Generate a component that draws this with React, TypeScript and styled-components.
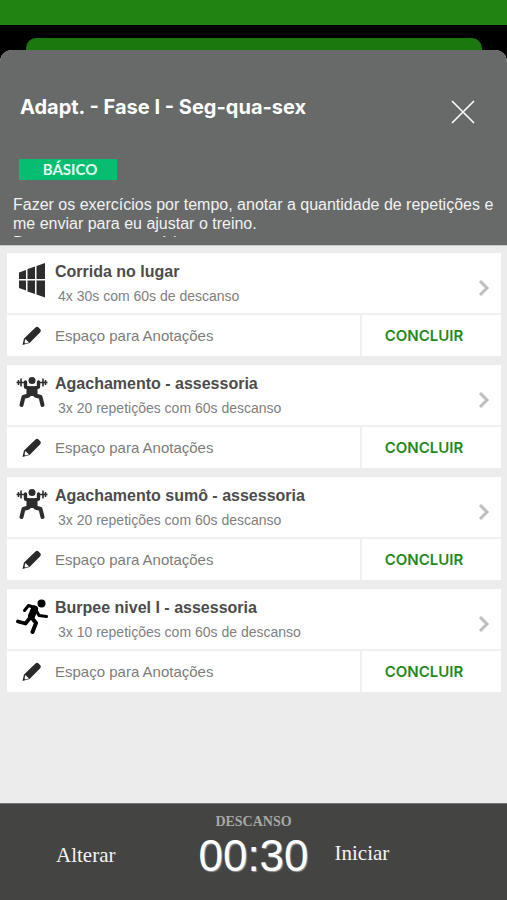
import React from "react";
import styled, { createGlobalStyle } from "styled-components";

const Global = createGlobalStyle`
  * { box-sizing: border-box; }
  body { margin: 0; background: #000; font-family: "Liberation Sans", Arial, sans-serif; }
  button, input { font: inherit; border: 0; padding: 0; margin: 0; background: none; border-radius: 0; }
  button { cursor: pointer; }
  h1, h2, p { margin: 0; }
`;

const Page = styled.div`
  min-height: 100vh;
  display: flex;
  flex-direction: column;
  background: #000;
`;
const StatusBar = styled.div`
  height: 25px;
  background: #1f8412;
`;
const BackSheet = styled.div`
  height: 12px;
  margin: 13px 25px 0 26px;
  border-radius: 10px 10px 0 0;
  background: #1a780f;
`;
const Sheet = styled.main`
  flex: 1;
  display: flex;
  flex-direction: column;
  background: #ebebeb;
  border-radius: 12px 12px 0 0;
  overflow: hidden;
`;
const Header = styled.header`
  height: 195px;
  padding: 44px 13px 0;
  background: #686a69;
  color: #fff;
`;
const TitleRow = styled.div`
  display: flex;
  justify-content: space-between;
  align-items: flex-start;
  height: 65px;
  padding: 0 19px 0 7px;
`;
const Title = styled.h1`
  font: 700 20px/26px Inter, sans-serif;
`;
const Close = styled.button`
  display: flex;
  margin-top: 6px;
  color: #fff;
`;
const Tag = styled.span`
  display: block;
  width: 98px;
  margin-left: 6px;
  padding-left: 4px;
  background: #06bd72;
  color: #e6fff3;
  font: 700 15px/21px Lato, sans-serif;
  text-align: center;
`;
const Description = styled.p`
  height: 42px;
  margin-top: 15px;
  overflow: hidden;
  color: #f2f2f2;
  font-size: 16px;
  line-height: 19px;
`;
const List = styled.ul`
  flex: 1;
  display: flex;
  flex-direction: column;
  gap: 9px;
  margin: 0;
  padding: 7px 6px 8px 7px;
  border-top: 1px solid #c8c8c8;
  list-style: none;
  background: #ececec;
`;
const Card = styled.li`
  background: #fff;
`;
const Exercise = styled.button`
  display: grid;
  grid-template-columns: 48px 1fr 23px;
  width: 100%;
  height: 60px;
  text-align: left;
`;
const IconCell = styled.span`
  display: flex;
  align-items: center;
  justify-content: center;
  height: 54px;
  padding-left: 2px;
`;
const Name = styled.h2`
  margin-top: 9px;
  color: #4c4c4c;
  font-size: 16px;
  line-height: 20px;
`;
const Detail = styled.p`
  margin-top: 5px;
  padding-left: 3px;
  color: #808080;
  font-size: 14px;
  line-height: 18px;
`;
const Chevron = styled.span`
  display: flex;
  align-self: end;
  padding-bottom: 16px;
`;
const Notes = styled.div`
  display: grid;
  grid-template-columns: 48px 1fr 141px;
  height: 43px;
  border-top: 2px solid #f0f0f0;
`;
const NotesIcon = styled.label`
  display: flex;
  align-items: center;
  padding-left: 15px;
`;
const NotesInput = styled.input`
  min-width: 0;
  color: #777;
  font-size: 15px;
  outline: 0;
  &::placeholder { color: #7c7c7c; opacity: 1; }
`;
const Finish = styled.button`
  border-left: 2px solid #f0f0f3;
  padding-right: 15px;
  color: #1f8a1c;
  && { font: 600 15px Inter, sans-serif; }
`;
const Footer = styled.footer`
  display: grid;
  grid-template-columns: 1fr 120px 1fr;
  height: 97px;
  background: #444442;
  border-top: 1px solid #777;
  color: #fff;
`;
const Timer = styled.div`
  display: flex;
  flex-direction: column;
  align-items: center;
  padding-top: 8px;
`;
const TimerLabel = styled.span`
  color: #a8a8a6;
  font: 700 14px/20px "Liberation Serif", serif;
`;
const Time = styled.time`
  font-size: 44px;
  line-height: 48px;
  text-shadow: 1px 1px 1px #999;
`;
const Action = styled.button<{ $side: "left" | "right" }>`
  align-self: start;
  justify-self: ${(p) => (p.$side === "left" ? "end" : "start")};
  margin: ${(p) => (p.$side === "left" ? "39px 78px 0 0" : "37px 0 0 21px")};
  color: #f4f4f4;
  && { font: 21px/24px "Liberation Serif", serif; }
`;

const CloseIcon = () => (
  <svg width="24" height="24" viewBox="0 0 24 24" stroke="currentColor" strokeWidth="1.6" fill="none">
    <path d="M1 1 23 23M23 1 1 23" />
  </svg>
);
const ChevronIcon = () => (
  <svg width="12" height="18" viewBox="0 0 12 18" stroke="#bfbfbf" strokeWidth="3" fill="none">
    <path d="M2 2 9 9 2 16" />
  </svg>
);
const PencilIcon = () => (
  <svg width="20" height="20" viewBox="0 0 20 20">
    <path d="M0.500 19 2 12.500 13.500 1.500Q15 0 16.500 1.500L18.500 3.500Q19.500 5 18 6.500L7.500 17Z" fill="#292929" />
    <path d="M3.300 13 7 16.500 3.200 17.500 2.500 16.500Z" fill="#fff" />
  </svg>
);
const WallIcon = () => (
  <svg width="30" height="36" viewBox="0 0 30 36" fill="#2d2d2d">
    <path d="M2 10.500 9 8V17H2ZM10.500 7 18 4.500V17H10.500ZM19.500 4 28 1V17H19.500ZM2 18.500H9V28.500L2 26ZM10.500 18.500H18V32L10.500 29.500ZM19.500 18.500H28V35.500L19.500 32.500Z" />
  </svg>
);
const SquatIcon = () => (
  <svg width="32" height="32" viewBox="0 0 32 32" stroke="#2d2d2d" fill="none" strokeLinejoin="round">
    <circle cx="16" cy="4.500" r="3.500" fill="#2d2d2d" stroke="none" />
    <path d="M0.500 6.500H9M23 6.500H31.500" strokeWidth="1.500" />
    <path d="M2.500 4V9M5 2.500V10.500M27 2.500V10.500M29.500 4V9" strokeWidth="1.600" />
    <path d="M9.500 6V11L13 12H19L22.500 11V6" strokeWidth="3.400" strokeLinecap="round" />
    <path d="M10.500 10.500H21.500V20H10.500Z" fill="#2d2d2d" stroke="none" />
    <path d="M12.500 19.500 7.500 21 5.500 29M19.500 19.500 24.500 21 26.500 29" strokeWidth="4" strokeLinecap="round" />
  </svg>
);
const RunIcon = () => (
  <svg width="32" height="36" viewBox="0 -1 32 36" stroke="#000" fill="none" strokeLinecap="round" strokeLinejoin="round">
    <circle cx="25.500" cy="4.500" r="4" fill="#000" stroke="none" />
    <path d="M8.500 11.500 12.500 6.500 18.500 8.500" strokeWidth="3" />
    <path d="M18.500 10 15.500 17" strokeWidth="7" />
    <path d="M20 11 23 16.500 30.500 17.500" strokeWidth="3" />
    <path d="M16 19 20 24 16.500 33" strokeWidth="4" />
    <path d="M13.500 19.500 9.500 24.500 2 22.500" strokeWidth="3.800" />
  </svg>
);

const exercises = [
  { name: "Corrida no lugar", detail: "4x 30s com 60s de descanso", Icon: WallIcon },
  { name: "Agachamento - assessoria", detail: "3x 20 repetições com 60s descanso", Icon: SquatIcon },
  { name: "Agachamento sumô - assessoria", detail: "3x 20 repetições com 60s descanso", Icon: SquatIcon },
  { name: "Burpee nivel I - assessoria", detail: "3x 10 repetições com 60s de descanso", Icon: RunIcon },
];

export default function App() {
  return (
    <Page>
      <Global />
      <StatusBar />
      <BackSheet />
      <Sheet>
        <Header>
          <TitleRow>
            <Title>Adapt. - Fase I - Seg-qua-sex</Title>
            <Close aria-label="Fechar"><CloseIcon /></Close>
          </TitleRow>
          <Tag>BÁSICO</Tag>
          <Description>
            Fazer os exercícios por tempo, anotar a quantidade de repetições e me enviar para eu ajustar o treino.
            <br />
            Descanso entre as séries
          </Description>
        </Header>
        <List>
          {exercises.map(({ name, detail, Icon }, i) => (
            <Card key={name}>
              <Exercise>
                <IconCell><Icon /></IconCell>
                <span>
                  <Name>{name}</Name>
                  <Detail>{detail}</Detail>
                </span>
                <Chevron><ChevronIcon /></Chevron>
              </Exercise>
              <Notes>
                <NotesIcon htmlFor={`notes-${i}`}><PencilIcon /></NotesIcon>
                <NotesInput id={`notes-${i}`} aria-label="Anotações" placeholder="Espaço para Anotações" />
                <Finish>CONCLUIR</Finish>
              </Notes>
            </Card>
          ))}
        </List>
        <Footer>
          <Action $side="left">Alterar</Action>
          <Timer>
            <TimerLabel>DESCANSO</TimerLabel>
            <Time>00:30</Time>
          </Timer>
          <Action $side="right">Iniciar</Action>
        </Footer>
      </Sheet>
    </Page>
  );
}
